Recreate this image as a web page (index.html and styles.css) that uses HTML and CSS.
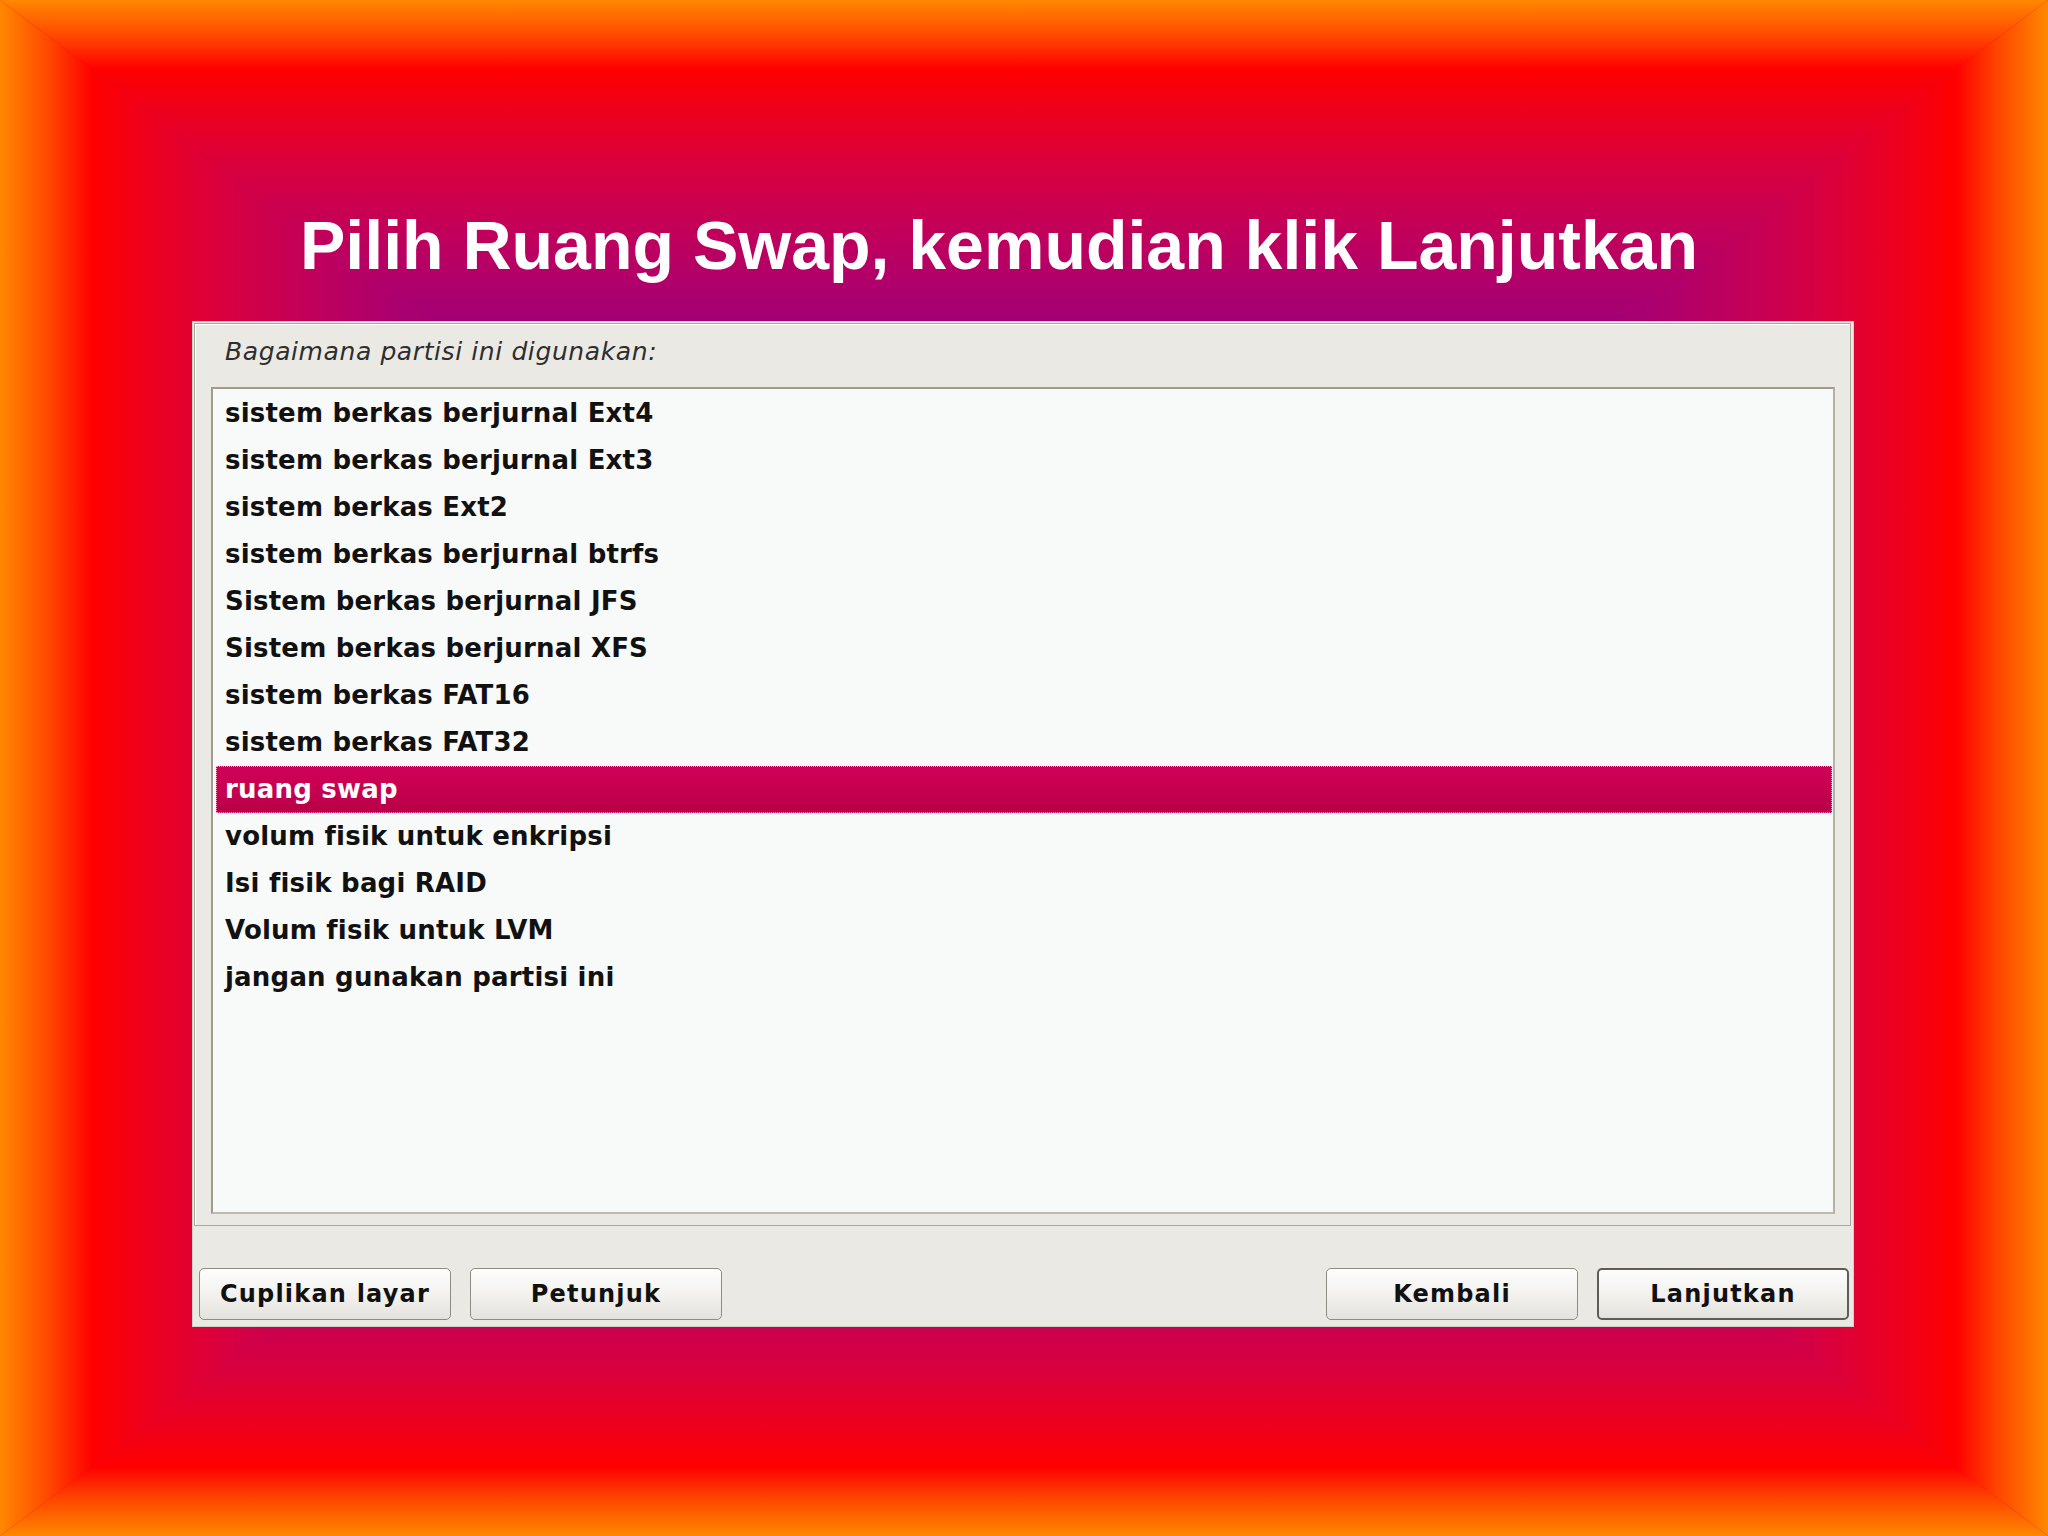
FILE: index.html
```html
<!DOCTYPE html>
<html lang="id">
<head>
<meta charset="utf-8">
<title>Pilih Ruang Swap</title>
<link rel="stylesheet" href="styles.css">
</head>
<body>
<div class="bg">
  <svg width="2048" height="1536" viewBox="0 0 2048 1536" preserveAspectRatio="none">
    <defs>
      <linearGradient id="gt" gradientUnits="userSpaceOnUse" x1="0" y1="768" x2="0" y2="0">
        <stop offset="0" stop-color="#5a0090"/><stop offset="0.55" stop-color="#9c0078"/><stop offset="0.61" stop-color="#aa0070"/><stop offset="0.70" stop-color="#c2005a"/><stop offset="0.78" stop-color="#d80040"/><stop offset="0.85" stop-color="#ec0020"/><stop offset="0.91" stop-color="#ff0000"/><stop offset="0.95" stop-color="#ff4400"/><stop offset="1" stop-color="#ff8800"/>
      </linearGradient>
      <linearGradient id="gb" gradientUnits="userSpaceOnUse" x1="0" y1="768" x2="0" y2="1536">
        <stop offset="0" stop-color="#5a0090"/><stop offset="0.55" stop-color="#9c0078"/><stop offset="0.61" stop-color="#aa0070"/><stop offset="0.70" stop-color="#c2005a"/><stop offset="0.78" stop-color="#d80040"/><stop offset="0.85" stop-color="#ec0020"/><stop offset="0.91" stop-color="#ff0000"/><stop offset="0.95" stop-color="#ff4400"/><stop offset="1" stop-color="#ff8800"/>
      </linearGradient>
      <linearGradient id="gl" gradientUnits="userSpaceOnUse" x1="1024" y1="0" x2="0" y2="0">
        <stop offset="0" stop-color="#5a0090"/><stop offset="0.55" stop-color="#9c0078"/><stop offset="0.61" stop-color="#aa0070"/><stop offset="0.70" stop-color="#c2005a"/><stop offset="0.78" stop-color="#d80040"/><stop offset="0.85" stop-color="#ec0020"/><stop offset="0.91" stop-color="#ff0000"/><stop offset="0.95" stop-color="#ff4400"/><stop offset="1" stop-color="#ff8800"/>
      </linearGradient>
      <linearGradient id="gr" gradientUnits="userSpaceOnUse" x1="1024" y1="0" x2="2048" y2="0">
        <stop offset="0" stop-color="#5a0090"/><stop offset="0.55" stop-color="#9c0078"/><stop offset="0.61" stop-color="#aa0070"/><stop offset="0.70" stop-color="#c2005a"/><stop offset="0.78" stop-color="#d80040"/><stop offset="0.85" stop-color="#ec0020"/><stop offset="0.91" stop-color="#ff0000"/><stop offset="0.95" stop-color="#ff4400"/><stop offset="1" stop-color="#ff8800"/>
      </linearGradient>
    </defs>
    <polygon points="0,0 2048,0 1024,768" fill="url(#gt)"/>
    <polygon points="0,1536 2048,1536 1024,768" fill="url(#gb)"/>
    <polygon points="0,0 0,1536 1024,768" fill="url(#gl)"/>
    <polygon points="2048,0 2048,1536 1024,768" fill="url(#gr)"/>
  </svg>
</div>

<main class="slide">
  <h1 class="title">Pilih Ruang Swap, kemudian klik Lanjutkan</h1>

  <section class="dialog">
    <div class="frame">
      <div class="label">Bagaimana partisi ini digunakan:</div>
      <ul class="list">
        <li class="row">sistem berkas berjurnal Ext4</li>
        <li class="row">sistem berkas berjurnal Ext3</li>
        <li class="row">sistem berkas Ext2</li>
        <li class="row">sistem berkas berjurnal btrfs</li>
        <li class="row">Sistem berkas berjurnal JFS</li>
        <li class="row">Sistem berkas berjurnal XFS</li>
        <li class="row">sistem berkas FAT16</li>
        <li class="row">sistem berkas FAT32</li>
        <li class="row selected">ruang swap</li>
        <li class="row">volum fisik untuk enkripsi</li>
        <li class="row">Isi fisik bagi RAID</li>
        <li class="row">Volum fisik untuk LVM</li>
        <li class="row">jangan gunakan partisi ini</li>
      </ul>
    </div>

    <div class="buttons">
      <div class="group">
        <button class="btn">Cuplikan layar</button>
        <button class="btn">Petunjuk</button>
      </div>
      <div class="group">
        <button class="btn">Kembali</button>
        <button class="btn default">Lanjutkan</button>
      </div>
    </div>
  </section>
</main>
</body>
</html>
```

FILE: styles.css
```css
html, body {
  margin: 0;
  padding: 0;
}

body {
  width: 2048px;
  height: 1536px;
  overflow: hidden;
  position: relative;
  background: #e8001e;
}

.bg {
  position: absolute;
  left: 0;
  top: 0;
  width: 2048px;
  height: 1536px;
  z-index: 0;
}

.bg svg {
  display: block;
}

.slide {
  position: relative;
  z-index: 1;
  padding-top: 205px;
}

.title {
  margin: 0;
  padding-left: 300px;
  font-family: "Liberation Sans", Arial, sans-serif;
  font-weight: bold;
  font-size: 68px;
  line-height: 80px;
  color: #ffffff;
  white-space: nowrap;
}

.dialog {
  margin: 36px 0 0 192px;
  width: 1662px;
  height: 1006px;
  box-sizing: border-box;
  background: #ebe9e4;
  border: 1px solid #d2d0c6;
  padding: 1px 2px 0 1px;
  display: flex;
  flex-direction: column;
}

.frame {
  height: 903px;
  box-sizing: border-box;
  border: 1px solid #aaa898;
  box-shadow: inset 1px 1px 0 #ffffff;
  padding: 0 15px 0 16px;
  display: flex;
  flex-direction: column;
}

.label {
  height: 63px;
  box-sizing: border-box;
  padding: 13px 0 0 14px;
  font-family: "DejaVu Sans", sans-serif;
  font-style: italic;
  font-size: 25px;
  line-height: 30px;
  letter-spacing: 0.6px;
  color: #2e2e2e;
  white-space: nowrap;
}

.list {
  margin: 0;
  list-style: none;
  height: 827px;
  box-sizing: border-box;
  background: #f8f9f9;
  border-style: solid;
  border-width: 2px;
  border-color: #9e9c8c #b4b2a4 #bcbaac #9e9c8c;
  padding: 1px 1px 0 3px;
}

.row {
  height: 47px;
  box-sizing: border-box;
  padding-left: 9px;
  font-family: "DejaVu Sans", sans-serif;
  font-weight: bold;
  font-size: 26px;
  line-height: 47px;
  letter-spacing: 0.2px;
  color: #111111;
  white-space: nowrap;
}

.row.selected {
  color: #ffffff;
  background: linear-gradient(to bottom, #cf0058 0%, #c4004f 60%, #b80048 100%);
  border: 1px dotted #ff9cc4;
  padding-left: 8px;
  line-height: 45px;
}

.buttons {
  margin-top: 42px;
  display: flex;
  justify-content: space-between;
  padding: 0 2px 0 5px;
}

.group {
  display: flex;
  gap: 19px;
}

.btn {
  width: 252px;
  height: 52px;
  box-sizing: border-box;
  margin: 0;
  padding: 0;
  border: 1px solid #8e8c82;
  border-radius: 5px;
  background: linear-gradient(to bottom, #fdfdfc 0%, #f3f2ef 50%, #e4e2dc 100%);
  box-shadow: inset 0 1px 0 #ffffff;
  font-family: "DejaVu Sans", sans-serif;
  font-weight: bold;
  font-size: 24px;
  letter-spacing: 1.2px;
  color: #111111;
  line-height: 50px;
  text-align: center;
}

.btn.default {
  border: 2px solid #5e5c54;
  line-height: 48px;
}
```
